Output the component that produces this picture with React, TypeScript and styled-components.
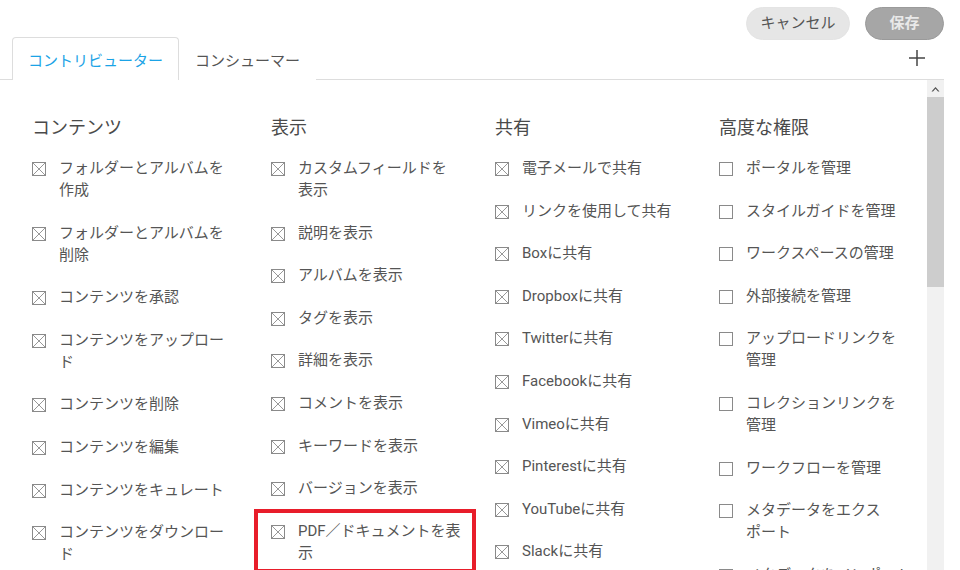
import React from "react";
import styled, { createGlobalStyle } from "styled-components";

const GlobalStyle = createGlobalStyle`
  html, body {
    margin: 0;
    padding: 0;
    background: #ffffff;
    overflow: hidden;
  }
  body {
    font-family: Roboto, "Noto Sans CJK JP", sans-serif;
    color: #555555;
  }
  * { box-sizing: border-box; }
`;

const Page = styled.div`
  width: 944px;
  height: 570px;
  display: flex;
  flex-direction: column;
`;

const TopBar = styled.div`
  height: 37px;
  padding-top: 7px;
  display: flex;
  justify-content: flex-end;
  align-items: flex-start;
  gap: 15px;
  position: relative;
  z-index: 1;
`;

const PillButton = styled.button<{ $primary?: boolean; $w: number }>`
  width: ${(p) => p.$w}px;
  height: 33px;
  border-radius: 17px;
  font-family: Roboto, "Noto Sans CJK JP", sans-serif;
  font-size: 15px;
  line-height: 31px;
  padding: 0;
  cursor: pointer;
  border: 1px solid ${(p) => (p.$primary ? "#9a9a9a" : "#e4e4e4")};
  background: ${(p) => (p.$primary ? "#a6a6a6" : "#e6e6e6")};
  color: ${(p) => (p.$primary ? "#e9e9e9" : "#555555")};
  font-weight: ${(p) => (p.$primary ? 700 : 400)};
`;

const TabRow = styled.div`
  height: 43px;
  padding-left: 12px;
  display: flex;
  align-items: flex-end;
  border-bottom: 1px solid #dddddd;
`;

const Tab = styled.div<{ $active?: boolean }>`
  height: 43px;
  margin-bottom: -1px;
  padding: 0 15px;
  display: flex;
  align-items: center;
  font-size: 15px;
  border: 1px solid ${(p) => (p.$active ? "#dddddd" : "transparent")};
  border-bottom: none;
  border-radius: 4px 4px 0 0;
  background: #ffffff;
  color: ${(p) => (p.$active ? "#1ba3e6" : "#555555")};
`;

const Spacer = styled.div`
  flex: 1;
`;

const AddButton = styled.div`
  width: 20px;
  height: 20px;
  margin: 0 17px 11px 0;
  display: flex;
  align-items: center;
  justify-content: center;
  align-self: flex-end;
`;

const Body = styled.div`
  flex: 1;
  display: flex;
  overflow: hidden;
`;

const Scroller = styled.div`
  flex: 1;
  overflow: hidden;
`;

const Columns = styled.div`
  padding: 36px 0 0 32px;
  display: grid;
  grid-template-columns: 239px 224px 224px 1fr;
  align-items: start;
`;

const Column = styled.div`
  display: flex;
  flex-direction: column;
`;

const Heading = styled.div`
  font-size: 18px;
  line-height: 24px;
  color: #4a4a4a;
  margin-bottom: 17px;
`;

const Item = styled.div<{ $highlight?: boolean }>`
  position: relative;
  display: flex;
  align-items: flex-start;
  gap: 13px;
  margin-bottom: 20.6px;
  font-size: 15px;
  line-height: 22px;
  color: #555555;

  &::after {
    content: "";
    display: ${(p) => (p.$highlight ? "block" : "none")};
    position: absolute;
    left: -17px;
    top: -11px;
    width: 214px;
    height: 56px;
    border: 4px solid #e81d2a;
    pointer-events: none;
  }
`;

const Box = styled.svg`
  flex: none;
  margin-top: 5px;
`;

const Label = styled.span`
  white-space: pre;
`;

const ScrollTrack = styled.div`
  width: 17px;
  background: #f1f1f1;
  display: flex;
  flex-direction: column;
`;

const ScrollArrow = styled.div`
  height: 17px;
  display: flex;
  align-items: center;
  justify-content: center;
`;

const ScrollThumb = styled.div`
  height: 190px;
  background: #cdcdcd;
`;

const CheckBox = ({ checked }: { checked: boolean }) => (
  <Box width="14" height="14" viewBox="0 0 14 14">
    <rect x="0.5" y="0.5" width="13" height="13" fill="#fff" stroke="#8a8a8a" strokeWidth="1" />
    {checked && (
      <>
        <line x1="1" y1="1" x2="13" y2="13" stroke="#989898" strokeWidth="1" />
        <line x1="13" y1="1" x2="1" y2="13" stroke="#989898" strokeWidth="1" />
      </>
    )}
  </Box>
);

type Perm = { label: string; highlight?: boolean };
type Group = { title: string; checked: boolean; items: Perm[] };

const groups: Group[] = [
  {
    title: "コンテンツ",
    checked: true,
    items: [
      { label: "フォルダーとアルバムを\n作成" },
      { label: "フォルダーとアルバムを\n削除" },
      { label: "コンテンツを承認" },
      { label: "コンテンツをアップロー\nド" },
      { label: "コンテンツを削除" },
      { label: "コンテンツを編集" },
      { label: "コンテンツをキュレート" },
      { label: "コンテンツをダウンロー\nド" },
    ],
  },
  {
    title: "表示",
    checked: true,
    items: [
      { label: "カスタムフィールドを\n表示" },
      { label: "説明を表示" },
      { label: "アルバムを表示" },
      { label: "タグを表示" },
      { label: "詳細を表示" },
      { label: "コメントを表示" },
      { label: "キーワードを表示" },
      { label: "バージョンを表示" },
      { label: "PDF／ドキュメントを表\n示", highlight: true },
    ],
  },
  {
    title: "共有",
    checked: true,
    items: [
      { label: "電子メールで共有" },
      { label: "リンクを使用して共有" },
      { label: "Boxに共有" },
      { label: "Dropboxに共有" },
      { label: "Twitterに共有" },
      { label: "Facebookに共有" },
      { label: "Vimeoに共有" },
      { label: "Pinterestに共有" },
      { label: "YouTubeに共有" },
      { label: "Slackに共有" },
    ],
  },
  {
    title: "高度な権限",
    checked: false,
    items: [
      { label: "ポータルを管理" },
      { label: "スタイルガイドを管理" },
      { label: "ワークスペースの管理" },
      { label: "外部接続を管理" },
      { label: "アップロードリンクを\n管理" },
      { label: "コレクションリンクを\n管理" },
      { label: "ワークフローを管理" },
      { label: "メタデータをエクス\nポート" },
      { label: "メタデータをインポート" },
    ],
  },
];

export default function App() {
  return (
    <>
      <GlobalStyle />
      <Page>
        <TopBar>
          <PillButton $w={104}>キャンセル</PillButton>
          <PillButton $w={79} $primary>
            保存
          </PillButton>
        </TopBar>
        <TabRow>
          <Tab $active>コントリビューター</Tab>
          <Tab>コンシューマー</Tab>
          <Spacer />
          <AddButton>
            <svg width="18" height="18" viewBox="0 0 18 18">
              <line x1="9" y1="1" x2="9" y2="17" stroke="#444" strokeWidth="1.5" />
              <line x1="1" y1="9" x2="17" y2="9" stroke="#444" strokeWidth="1.5" />
            </svg>
          </AddButton>
        </TabRow>
        <Body>
          <Scroller>
            <Columns>
              {groups.map((g) => (
                <Column key={g.title}>
                  <Heading>{g.title}</Heading>
                  {g.items.map((it) => (
                    <Item key={it.label} $highlight={it.highlight}>
                      <CheckBox checked={g.checked} />
                      <Label>{it.label}</Label>
                    </Item>
                  ))}
                </Column>
              ))}
            </Columns>
          </Scroller>
          <ScrollTrack>
            <ScrollArrow>
              <svg width="9" height="6" viewBox="0 0 9 6">
                <path d="M0.5 5.5 L4.5 1 L8.5 5.5 L7 5.5 L4.5 2.8 L2 5.5 Z" fill="#505050" />
              </svg>
            </ScrollArrow>
            <ScrollThumb />
          </ScrollTrack>
        </Body>
      </Page>
    </>
  );
}
